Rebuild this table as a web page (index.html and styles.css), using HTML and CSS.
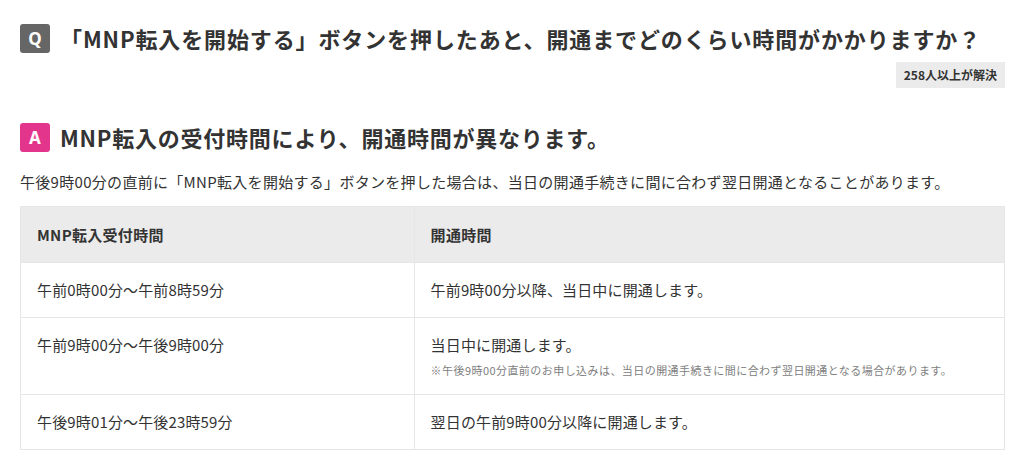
FILE: index.html
```html
<!DOCTYPE html>
<html lang="ja">
<head>
<meta charset="utf-8">
<title>FAQ</title>
<link rel="stylesheet" href="styles.css">
</head>
<body>
<main class="faq">
  <section class="question">
    <div class="q-row">
      <span class="mark mark-q">Q</span>
      <h1 class="q-title">「MNP転入を開始する」ボタンを押したあと、開通までどのくらい時間がかかりますか？</h1>
    </div>
    <div class="solved-row"><span class="solved">258人以上が解決</span></div>
  </section>
  <section class="answer">
    <div class="a-row">
      <span class="mark mark-a">A</span>
      <h2 class="a-title">MNP転入の受付時間により、開通時間が異なります。</h2>
    </div>
    <p class="lead">午後9時00分の直前に「MNP転入を開始する」ボタンを押した場合は、当日の開通手続きに間に合わず翌日開通となることがあります。</p>
    <table class="times">
      <thead>
        <tr><th class="col1">MNP転入受付時間</th><th>開通時間</th></tr>
      </thead>
      <tbody>
        <tr><td>午前0時00分〜午前8時59分</td><td>午前9時00分以降、当日中に開通します。</td></tr>
        <tr><td>午前9時00分〜午後9時00分</td><td>当日中に開通します。<p class="note">※午後9時00分直前のお申し込みは、当日の開通手続きに間に合わず翌日開通となる場合があります。</p></td></tr>
        <tr><td>午後9時01分〜午後23時59分</td><td>翌日の午前9時00分以降に開通します。</td></tr>
      </tbody>
    </table>
  </section>
</main>
</body>
</html>
```
FILE: styles.css
```css
* { box-sizing: border-box; }
html, body { margin: 0; padding: 0; background: #fff; }
body {
  font-family: "Noto Sans CJK JP", "Noto Sans", sans-serif;
  color: #333;
}
.faq { padding: 24px 19px 0 20px; }
.q-row, .a-row { display: flex; align-items: center; gap: 10px; }
.mark {
  flex: none;
  width: 30px; height: 29px;
  border-radius: 3px;
  color: #fff;
  font-family: "Noto Sans", sans-serif;
  font-weight: 700;
  font-size: 17px;
  display: flex; align-items: center; justify-content: center;
}
.mark-q { background: #666; }
.mark-a { background: #e4358c; }
.q-title, .a-title {
  margin: 0;
  font-size: 22px;
  font-weight: 700;
  line-height: 29px;
  color: #333;
}
.q-title { letter-spacing: 0.04em; }
.a-title { letter-spacing: 0.035em; }
.solved-row { display: flex; justify-content: flex-end; margin-top: 9px; }
.solved {
  background: #ebebeb;
  font-size: 12px;
  font-weight: 700;
  height: 26px;
  line-height: 26px;
  padding: 0 8px;
  color: #333;
}
.answer { margin-top: 35px; }
.lead {
  margin: 17px 0 0 0;
  font-size: 15px;
  line-height: 26px;
  letter-spacing: 0.02em;
}
.times {
  margin-top: 11px;
  width: 100%;
  border-collapse: collapse;
  font-size: 15px;
  letter-spacing: 0.01em;
}
.times th, .times td {
  border: 1px solid #e6e6e6;
  text-align: left;
  vertical-align: top;
  padding: 16px 16px;
  line-height: 22px;
}
.times th {
  background: #ebebeb;
  font-size: 15px;
  font-weight: 700;
  letter-spacing: 0.02em;
  height: 56px;
  vertical-align: middle;
}
.times .col1 { width: 40%; }
.times td { height: 54px; }
.note {
  margin: 6px 0 0 0;
  font-size: 11px;
  line-height: 16px;
  letter-spacing: 0.04em;
  color: #808080;
}
```
